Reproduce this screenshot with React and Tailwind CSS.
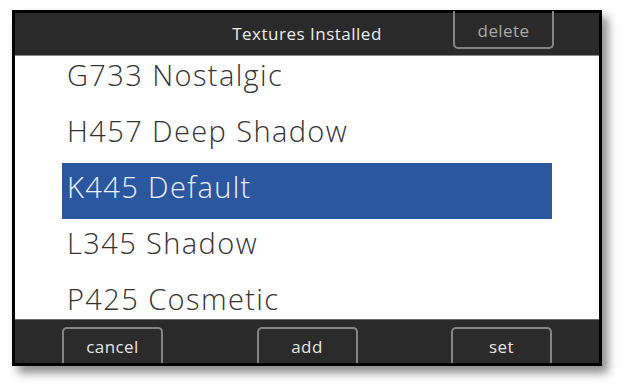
const textures = [
  { id: 'G733', name: 'Nostalgic' },
  { id: 'H457', name: 'Deep Shadow' },
  { id: 'K445', name: 'Default' },
  { id: 'L345', name: 'Shadow' },
  { id: 'P425', name: 'Cosmetic' },
];

function FooterButton({ label }) {
  return (
    <button className="w-[101px] h-[36px] rounded-t-[5px] border-2 border-b-0 border-[#858585] bg-[#2b2b2b] text-[17px] font-medium tracking-[0.4px] text-[#e6e6e6] pt-[1px]">
      {label}
    </button>
  );
}

export default function App() {
  const selected = 'K445';

  return (
    <div className="w-[625px] h-[384px] bg-white pt-[10px] pl-[12px]" style={{ fontFamily: '"Open Sans", "Noto Sans", sans-serif' }}>
      <div className="w-[590px] h-[356px] border-[3px] border-black flex flex-col shadow-[6px_7px_9px_rgba(0,0,0,0.45)]">
        {/* Header */}
        <div className="relative h-[43px] bg-[#2a2a2a] flex items-center justify-center border-b border-[#8a8a8a]">
          <span className="text-[17px] font-medium text-[#ececec] pb-[1px] tracking-[0.5px]">Textures Installed</span>
          <button className="absolute right-[45px] -top-[2px] w-[101px] h-[38px] rounded-b-[5px] border-2 border-t-0 border-[#858585] text-[17px] font-medium tracking-[0.4px] text-[#a8a8a8] pt-[4px]">
            delete
          </button>
        </div>

        {/* List */}
        <div className="h-[263px] overflow-hidden bg-white">
          <div className="-mt-[5px] px-[47px]">
            {textures.map(t => {
              const active = t.id === selected;
              return (
                <div
                  key={t.id}
                  className={
                    'h-[56px] flex items-center pl-[5px] pb-[9px] text-[29px] font-light tracking-[1.4px] ' +
                    (active ? 'bg-[#2a57a0] text-[#eef2f8]' : 'text-[#333333]')
                  }
                >
                  {t.id} {t.name}
                </div>
              );
            })}
          </div>
        </div>

        {/* Footer */}
        <div className="flex-1 bg-[#2a2a2a] border-t border-[#6a6a6a] flex items-end justify-between px-[47px]">
          <FooterButton label="cancel" />
          <FooterButton label="add" />
          <FooterButton label="set" />
        </div>
      </div>
    </div>
  );
}
